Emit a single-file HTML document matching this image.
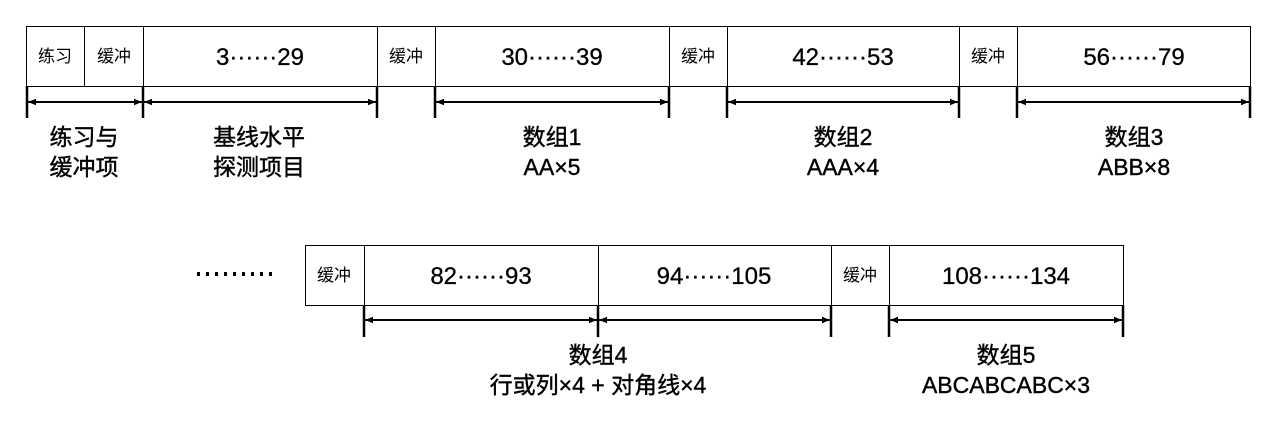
<!DOCTYPE html>
<html><head><meta charset="utf-8"><style>
html,body{margin:0;padding:0;background:#fff;}
svg{display:block;}
text{font-family:"Liberation Sans","Noto Sans CJK SC",sans-serif;fill:#000;text-anchor:middle;}
.s{font-size:17px;}
.n{font-size:24px;stroke:#000;stroke-width:0.3px;}
.l{font-size:23px;stroke:#000;stroke-width:0.4px;}
</style></head><body>
<svg width="1277" height="436" viewBox="0 0 1277 436" xmlns="http://www.w3.org/2000/svg">
<defs>
<marker id="a" viewBox="0 0 10 10" refX="10" refY="5" markerWidth="8" markerHeight="8" orient="auto-start-reverse" markerUnits="userSpaceOnUse"><path d="M0,1 L10,5 L0,9 z" fill="#000"/></marker>
</defs>
<g fill="none" stroke="#000" stroke-width="1">
<rect x="26.5" y="26.5" width="1224" height="60"/>
<path d="M84.5 26v60M143.5 26v60M377.5 26v60M435.5 26v60M669.5 26v60M727.5 26v60M959.5 26v60M1017.5 26v60"/>
<rect x="305.5" y="245.5" width="818" height="60"/>
<path d="M364.5 245v60M598.5 245v60M831.5 245v60M889.5 245v60"/>
</g>
<g stroke="#000" stroke-width="2.5">
<path d="M27 86v32M143 86v32M377 86v32M435 86v32M669 86v32M727 86v32M959 86v32M1017 86v32M1250 86v32"/>
<path d="M364 305v32M598 305v32M831 305v32M889 305v32M1123 305v32"/>
</g>
<g stroke="#000" stroke-width="2">
<line x1="28" y1="102" x2="142" y2="102" marker-start="url(#a)" marker-end="url(#a)"/>
<line x1="144" y1="102" x2="376" y2="102" marker-start="url(#a)" marker-end="url(#a)"/>
<line x1="436" y1="102" x2="668" y2="102" marker-start="url(#a)" marker-end="url(#a)"/>
<line x1="728" y1="102" x2="958" y2="102" marker-start="url(#a)" marker-end="url(#a)"/>
<line x1="1018" y1="102" x2="1249" y2="102" marker-start="url(#a)" marker-end="url(#a)"/>
<line x1="365" y1="320" x2="597" y2="320" marker-start="url(#a)" marker-end="url(#a)"/>
<line x1="599" y1="320" x2="830" y2="320" marker-start="url(#a)" marker-end="url(#a)"/>
<line x1="890" y1="320" x2="1122" y2="320" marker-start="url(#a)" marker-end="url(#a)"/>
</g>
<text class="s" x="55" y="62">练习</text>
<text class="s" x="114" y="62">缓冲</text>
<text class="n" x="260" y="65">3······29</text>
<text class="s" x="406" y="62">缓冲</text>
<text class="n" x="552" y="65">30······39</text>
<text class="s" x="698" y="62">缓冲</text>
<text class="s" x="988" y="62">缓冲</text>
<text class="n" x="843" y="65">42······53</text>
<text class="n" x="1134" y="65">56······79</text>
<text class="l" x="84" y="145">练习与</text>
<text class="l" x="84" y="175">缓冲项</text>
<text class="l" x="259" y="145">基线水平</text>
<text class="l" x="259" y="175">探测项目</text>
<text class="l" x="552" y="145">数组1</text>
<text class="l" x="552" y="175">AA×5</text>
<text class="l" x="843" y="145">数组2</text>
<text class="l" x="843" y="175">AAA×4</text>
<text class="l" x="1134" y="145">数组3</text>
<text class="l" x="1134" y="175">ABB×8</text>
<g fill="#000">
<rect x="197" y="272" width="3" height="4"/><rect x="206" y="272" width="3" height="4"/><rect x="215" y="272" width="3" height="4"/><rect x="224" y="272" width="3" height="4"/><rect x="233" y="272" width="3" height="4"/><rect x="242" y="272" width="3" height="4"/><rect x="251" y="272" width="3" height="4"/><rect x="260" y="272" width="3" height="4"/><rect x="269" y="272" width="3" height="4"/>
</g>
<text class="s" x="334" y="281">缓冲</text>
<text class="n" x="481" y="284">82······93</text>
<text class="n" x="714" y="284">94······105</text>
<text class="s" x="860" y="281">缓冲</text>
<text class="n" x="1006" y="284">108······134</text>
<text class="l" x="598" y="363">数组4</text>
<text class="l" x="598" y="393">行或列×4 + 对角线×4</text>
<text class="l" x="1006" y="363">数组5</text>
<text class="l" x="1006" y="393">ABCABCABC×3</text>
</svg>
</body></html>
